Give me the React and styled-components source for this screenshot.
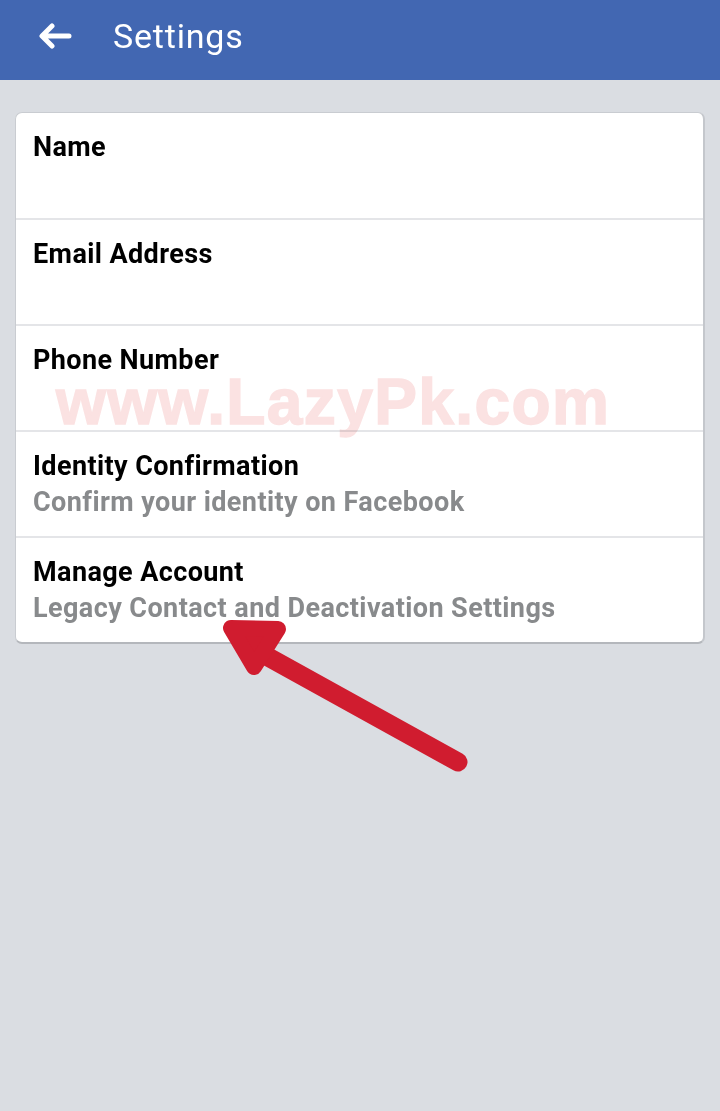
import React from "react";
import styled, { createGlobalStyle } from "styled-components";

const GlobalStyle = createGlobalStyle`
  html, body {
    margin: 0;
    padding: 0;
    background: #dadde2;
    font-family: Roboto, "Liberation Sans", sans-serif;
  }
`;

const rows = [
  { title: "Name" },
  { title: "Email Address" },
  { title: "Phone Number" },
  { title: "Identity Confirmation", sub: "Confirm your identity on Facebook" },
  { title: "Manage Account", sub: "Legacy Contact and Deactivation Settings" },
];

function App() {
  return (
    <Page>
      <GlobalStyle />
      <Header>
        <BackButton aria-label="Back">
          <svg width="34" height="26" viewBox="0 0 34 26">
            <path
              d="M31 13H5M14 3L4 13l10 10"
              fill="none"
              stroke="#fff"
              strokeWidth="5"
              strokeLinecap="round"
              strokeLinejoin="round"
            />
          </svg>
        </BackButton>
        <Title>Settings</Title>
      </Header>
      <Body>
        <Card>
          {rows.map((r) => (
            <Row key={r.title}>
              <RowTitle>{r.title}</RowTitle>
              {r.sub && <RowSub>{r.sub}</RowSub>}
            </Row>
          ))}
          <Watermark>www.LazyPk.com</Watermark>
        </Card>
      </Body>
      <Arrow width="720" height="1111" viewBox="0 0 720 1111">
        <g stroke="#d01c2f" fill="#d01c2f" strokeLinecap="round" strokeLinejoin="round">
          <line x1="252" y1="648" x2="458" y2="762" strokeWidth="19" />
          <polygon points="231,628 278,629 254,667" strokeWidth="16" />
        </g>
      </Arrow>
    </Page>
  );
}

const Page = styled.div`
  position: relative;
  width: 720px;
  min-height: 1111px;
  background: #dadde2;
  overflow: hidden;
`;

const Header = styled.header`
  height: 80px;
  background: #4267b2;
  display: flex;
  align-items: center;
  padding-left: 38px;
  padding-bottom: 9px;
  box-sizing: border-box;
`;

const BackButton = styled.div`
  display: flex;
  align-items: center;
  width: 36px;
  height: 30px;
`;

const Title = styled.h1`
  margin: 0 0 0 39px;
  color: #fff;
  font-size: 34px;
  font-weight: 400;
  letter-spacing: 0.8px;
  line-height: 40px;
`;

const Body = styled.main`
  padding: 32px 15px 0;
`;

const Card = styled.section`
  position: relative;
  background: #fff;
  border: 1px solid #c9ccd1;
  border-bottom: 2px solid #b4b7bc;
  border-right: 2px solid #c4c7cc;
  border-radius: 7px;
  overflow: hidden;
`;

const Row = styled.div`
  height: 106px;
  box-sizing: border-box;
  padding: 17px 17px 0;
  border-top: 2px solid #e4e5e8;
  &:first-child {
    border-top: none;
    height: 105px;
  }
`;

const RowTitle = styled.div`
  font-size: 27px;
  font-weight: 700;
  color: #000;
  line-height: 34px;
  letter-spacing: 0.4px;
`;

const RowSub = styled.div`
  font-size: 27px;
  font-weight: 700;
  color: #888a8c;
  line-height: 34px;
  margin-top: 2px;
  letter-spacing: 0.42px;
`;

const Watermark = styled.div`
  position: absolute;
  left: 40px;
  top: 267px;
  font-family: "Liberation Sans", Arial, sans-serif;
  font-size: 64px;
  line-height: 44px;
  font-weight: 700;
  color: #fbe2e2;
  letter-spacing: 1.4px;
  -webkit-text-stroke: 1.5px #fbe2e2;
  mix-blend-mode: multiply;
  pointer-events: none;
  white-space: nowrap;
`;

const Arrow = styled.svg`
  position: absolute;
  left: 0;
  top: 0;
  pointer-events: none;
`;

export default App;
